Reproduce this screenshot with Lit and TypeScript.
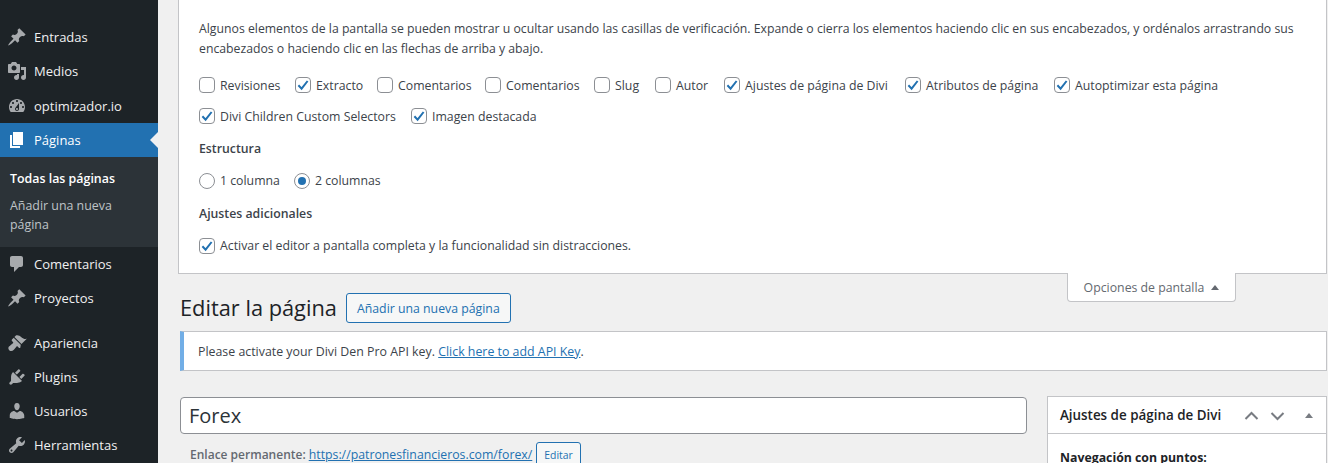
import { LitElement, html, css, svg } from "lit";
import { customElement } from "lit/decorators.js";

const ICONS: Record<string, string> = {
  post: "M10.44 3.02l1.82-1.82 6.36 6.35-1.83 1.82c-1.05-.68-2.48-.57-3.41.36l-.75.75c-.92.93-1.04 2.35-.35 3.41l-1.83 1.82-2.41-2.41-2.8 2.79c-.42.42-3.38 2.71-3.8 2.29s1.86-3.39 2.28-3.81l2.79-2.79L4.1 9.36l1.83-1.82c1.05.69 2.48.57 3.4-.36l.75-.75c.93-.92 1.05-2.35.36-3.41z",
  media: "M13 11V4c0-.55-.45-1-1-1h-1.67L9 1H5L3.67 3H2c-.55 0-1 .45-1 1v7c0 .55.45 1 1 1h10c.55 0 1-.45 1-1zM7 4.5c1.38 0 2.5 1.12 2.5 2.5S8.38 9.5 7 9.5 4.5 8.38 4.5 7 5.62 4.5 7 4.5zM14 6h5v10.5c0 1.38-1.12 2.5-2.5 2.5S14 17.88 14 16.5s1.12-2.5 2.5-2.5c.17 0 .34.02.5.05V9h-3V6zm-4 8.05V13h2v3.5c0 1.38-1.12 2.5-2.5 2.5S7 17.88 7 16.5 8.12 14 9.5 14c.17 0 .34.02.5.05z",
  gauge: "M3.76 16h12.48c1.1-1.37 1.76-3.11 1.76-5 0-4.42-3.58-8-8-8s-8 3.58-8 8c0 1.89.66 3.63 1.76 5zM10 4c.55 0 1 .45 1 1s-.45 1-1 1-1-.45-1-1 .45-1 1-1zM6 6c.55 0 1 .45 1 1s-.45 1-1 1-1-.45-1-1 .45-1 1-1zm8 0c.55 0 1 .45 1 1s-.45 1-1 1-1-.45-1-1 .45-1 1-1zm-5.37 5.55L12 7v6c0 1.1-.9 2-2 2s-2-.9-2-2c0-.57.24-1.08.63-1.45zM4 10c.55 0 1 .45 1 1s-.45 1-1 1-1-.45-1-1 .45-1 1-1zm12 0c.55 0 1 .45 1 1s-.45 1-1 1-1-.45-1-1 .45-1 1-1zm-5 3c0-.55-.45-1-1-1s-1 .45-1 1 .45 1 1 1 1-.45 1-1z",
  page: "M6 15V2h10v13H6zm-1 1h8v2H3V5h2v11z",
  comments: "M5 2h9c1.1 0 2 .9 2 2v7c0 1.1-.9 2-2 2h-2l-5 5v-5H5c-1.1 0-2-.9-2-2V4c0-1.1.9-2 2-2z",
  appearance: "M14.48 11.06L7.41 3.99l1.5-1.5c.5-.56 2.3-.47 3.51.32 1.21.8 1.43 1.28 2.91 2.1 1.18.64 2.45 1.26 4.45.85zm-.71.71L6.7 4.7 4.93 6.47c-.39.39-.39 1.02 0 1.41l1.06 1.06c.39.39.39 1.03 0 1.42-.6.6-1.43 1.11-2.21 1.69-.35.26-.7.53-1.01.84C1.43 13.23.78 15 2 17.1c.09.09.31.3.53.44 1.24 1.01 3.06.63 4.34-.69.31-.31.58-.66.85-1.01.57-.78 1.08-1.61 1.69-2.21.39-.39 1.02-.39 1.41 0l1.06 1.06c.39.39 1.02.39 1.41 0z",
  plugins: "M13.11 4.36L9.87 7.6 8 5.73l3.24-3.24c.35-.34 1.05-.2 1.56.32.52.51.66 1.21.31 1.55zm-8 1.77l.91-1.12 9.01 9.01-1.19.84c-.71.71-2.63 1.16-3.82 1.16H6.14L4.9 17.26c-.59.59-1.54.59-2.12 0-.59-.58-.59-1.53 0-2.12l1.24-1.24v-3.88c0-1.13.4-3.19 1.09-3.89zm7.26 3.97l3.24-3.24c.34-.35 1.04-.21 1.55.31.52.51.66 1.21.31 1.55l-3.24 3.25z",
  users: "M10 9.25c-2.27 0-2.73-3.44-2.73-3.44C7 4.02 7.82 2 9.97 2c2.16 0 2.98 2.02 2.71 3.81 0 0-.41 3.44-2.68 3.44zm0 2.57L12.72 10c2.39 0 4.52 2.33 4.52 4.53v2.49s-3.65 1.13-7.24 1.13c-3.65 0-7.24-1.13-7.24-1.13v-2.49c0-2.25 1.94-4.48 4.47-4.48z",
  tools: "M16.68 9.77c-1.34 1.34-3.3 1.67-4.95.99l-5.41 6.52c-.99.99-2.59.99-3.58 0s-.99-2.59 0-3.57l6.52-5.42c-.68-1.65-.35-3.61.99-4.95 1.28-1.28 3.12-1.62 4.72-1.06l-2.89 2.89 2.82 2.82 2.86-2.87c.53 1.58.18 3.39-1.08 4.65zM3.81 16.21c.4.39 1.04.39 1.43 0 .4-.4.4-1.04 0-1.43-.39-.4-1.03-.4-1.43 0-.39.39-.39 1.03 0 1.43z",
};

const icon = (n: string) => html`<svg class="ic" viewBox="0 0 20 20"><path d=${ICONS[n]}></path></svg>`;

// label, checked, width of the item in the row
const CHECKS: [string, boolean, number][] = [
  ["Revisiones", false, 96], ["Extracto", true, 82], ["Comentarios", false, 108], ["Comentarios", false, 109],
  ["Slug", false, 61], ["Autor", false, 69], ["Ajustes de página de Divi", true, 181],
  ["Atributos de página", true, 149], ["Autoptimizar esta página", true, 180],
  ["Divi Children Custom Selectors", true, 212], ["Imagen destacada", true, 130],
];

const check = (label: string, on: boolean, w?: number) => html`<label class="opt" style=${w ? `width:${w}px` : ""}><span class="cb">${on
  ? svg`<svg viewBox="0 0 16 16" width="16" height="16"><path d="M3.4 8.2l3.2 3.4 6-7.6" fill="none" stroke="#2271b1" stroke-width="2"></path></svg>`
  : ""}</span>${label}</label>`;

@customElement("app-root")
export class AppRoot extends LitElement {
  static styles = css`
    :host { display: flex; width: 1328px; height: 463px; overflow: hidden; background: #f0f0f0;
      font-family: "Open Sans", "Noto Sans", sans-serif; font-size: 12.3px; color: #3c434a; }
    .side { width: 158px; flex: none; background: #1d2327; padding-top: 20.3px; box-sizing: border-box; color: #f0f0f1; }
    .item { display: flex; align-items: center; height: 34.1px; font-size: 13px; position: relative; }
    .ic { width: 20px; height: 20px; fill: #a7aaad; margin: 0 7px 0 7px; flex: none; }
    .item.cur { background: #2271b1; color: #fff; }
    .item.cur .ic { fill: #fff; }
    .item.cur::after { content: ""; position: absolute; right: 0; top: 50%; margin-top: -8px;
      border: 8px solid transparent; border-right-color: #f0f0f1; }
    .sub { background: #2c3338; height: 90px; box-sizing: border-box; padding: 13px 10px; font-size: 12.4px; color: #bfc3c7; line-height: 18.5px; }
    .sub b { display: block; color: #fff; font-weight: 600; margin-bottom: 9px; }
    .sep { height: 11px; }
    .main { flex: 1; min-width: 0; padding-left: 20px; padding-right: 1px; }
    .panel { background: #fff; border: 1px solid #c3c4c7; border-top: 0; height: 274px; box-sizing: border-box; padding: 19px 20px 0; position: relative; }
    .panel p { margin: 0 0 18px; line-height: 20px; font-size: 12.25px; }
    .opts { display: flex; flex-wrap: wrap; row-gap: 15px; }
    .opt { display: flex; align-items: center; gap: 5px; height: 16px; white-space: nowrap; flex: none; box-sizing: border-box; }
    .cb { width: 16px; height: 16px; box-sizing: border-box; border: 1px solid #8c8f94; border-radius: 4px; background: #fff; flex: none; display: block; overflow: hidden; }
    .cb svg { display: block; margin: -1px; }
    h5 { margin: 16px 0 0; font-size: 12.3px; font-weight: 600; line-height: 18px; color: #3c434a; }
    .full { margin-top: 15px; }
    .rad { display: flex; gap: 14px; margin-top: 14.5px; }
    .rb { width: 16px; height: 16px; box-sizing: border-box; border: 1px solid #8c8f94; border-radius: 50%; background: #fff; flex: none; display: flex; align-items: center; justify-content: center; }
    .rb i { width: 8px; height: 8px; border-radius: 50%; background: #2271b1; display: block; }
    .tabwrap { display: flex; justify-content: flex-end; height: 0; padding-right: 91px; position: relative; z-index: 1; }
    .tab { width: 169px; height: 29px; flex: none; margin-top: -1px; box-sizing: border-box; background: #fff; border: 1px solid #c3c4c7; border-top: 0; border-radius: 0 0 4px 4px;
      display: flex; align-items: center; justify-content: center; gap: 7px; color: #646970; }
    .tab i { width: 0; height: 0; border: 4.5px solid transparent; border-top: 0; border-bottom: 5px solid #646970; }
    .head { display: flex; align-items: center; padding-left: 2px; margin-top: 19px; gap: 9px; height: 30px; }
    h1 { margin: 0; font-size: 21.8px; font-weight: 400; color: #1d2327; line-height: 30px; }
    .btn { height: 30px; box-sizing: border-box; border: 1px solid #2271b1; border-radius: 3px; background: #f6f7f7; color: #2271b1; padding: 0 10px; display: flex; align-items: center; }
    .notice { margin: 8px 0 0 2px; height: 40px; box-sizing: border-box; background: #fff; border: 1px solid #c3c4c7; border-left: 4px solid #72aee6; padding-left: 14px; display: flex; align-items: center; white-space: pre; font-size: 12.37px; }
    a { color: #2271b1; text-decoration: underline; }
    .cols { display: flex; margin: 26px 0 0 2px; gap: 20px; align-items: flex-start; }
    .left { flex: 1; min-width: 0; }
    .title { height: 37px; box-sizing: border-box; border: 1px solid #8c8f94; border-radius: 4px; background: #fff; font-size: 20px; line-height: 35px; padding-left: 8px; color: #2c3338; }
    .link { display: flex; align-items: center; margin: 6px 0 0 10px; gap: 3px; white-space: pre; color: #646970; }
    .link b { font-weight: 600; font-size: 12px; }
    .small { height: 26px; margin: 2px 0 0 1px; box-sizing: border-box; border: 1px solid #2271b1; border-radius: 3px; background: #f6f7f7; color: #2271b1; font-size: 10.4px; padding: 0 7px; display: flex; align-items: center; }
    .box { width: 280px; flex: none; margin-top: -1px; box-sizing: border-box; background: #fff; border: 1px solid #c3c4c7; }
    .boxh { height: 36px; display: flex; align-items: center; padding: 0 12px; border-bottom: 1px solid #c3c4c7; font-size: 13.4px; font-weight: 600; color: #1d2327; }
    .boxh span { flex: 1; }
    .boxh svg { display: block; margin-right: -1px; }
    .boxb { padding: 15px 12px; font-weight: 700; color: #1d2327; }
  `;

  render() {
    return html`
      <nav class="side">
        <div class="item">${icon("post")}Entradas</div>
        <div class="item">${icon("media")}Medios</div>
        <div class="item">${icon("gauge")}optimizador.io</div>
        <div class="item cur">${icon("page")}Páginas</div>
        <div class="sub"><b>Todas las páginas</b>Añadir una nueva<br />página</div>
        <div class="item">${icon("comments")}Comentarios</div>
        <div class="item">${icon("post")}Proyectos</div>
        <div class="sep"></div>
        <div class="item">${icon("appearance")}Apariencia</div>
        <div class="item">${icon("plugins")}Plugins</div>
        <div class="item">${icon("users")}Usuarios</div>
        <div class="item">${icon("tools")}Herramientas</div>
      </nav>
      <main class="main">
        <section class="panel">
          <p>Algunos elementos de la pantalla se pueden mostrar u ocultar usando las casillas de verificación. Expande o cierra los elementos haciendo clic en sus encabezados, y ordénalos arrastrando sus encabezados o haciendo clic en las flechas de arriba y abajo.</p>
          <div class="opts">${CHECKS.map(([l, c, w]) => check(l, c, w))}</div>
          <h5>Estructura</h5>
          <div class="rad">
            <label class="opt"><span class="rb"></span>1 columna</label>
            <label class="opt"><span class="rb"><i></i></span>2 columnas</label>
          </div>
          <h5>Ajustes adicionales</h5>
          <div class="opts full">${check("Activar el editor a pantalla completa y la funcionalidad sin distracciones.", true)}</div>
        </section>
        <div class="tabwrap"><div class="tab">Opciones de pantalla <i></i></div></div>
        <div class="head"><h1>Editar la página</h1><div class="btn">Añadir una nueva página</div></div>
        <div class="notice">Please activate your Divi Den Pro API key. <a>Click here to add API Key</a>.</div>
        <div class="cols">
          <div class="left">
            <div class="title">Forex</div>
            <div class="link"><b>Enlace permanente:</b><a>https://patronesfinancieros.com/forex/</a><div class="small">Editar</div></div>
          </div>
          <aside class="box">
            <div class="boxh"><span>Ajustes de página de Divi</span>
              <svg width="72" height="20" viewBox="0 0 72 20"><path d="M2.5 14l6-6 6 6M28.5 8l6 6 6-6" fill="none" stroke="#787c82" stroke-width="2"></path><path d="M62 13l4-5 4 5z" fill="#787c82"></path></svg>
            </div>
            <div class="boxb">Navegación con puntos:</div>
          </aside>
        </div>
      </main>
    `;
  }
}
